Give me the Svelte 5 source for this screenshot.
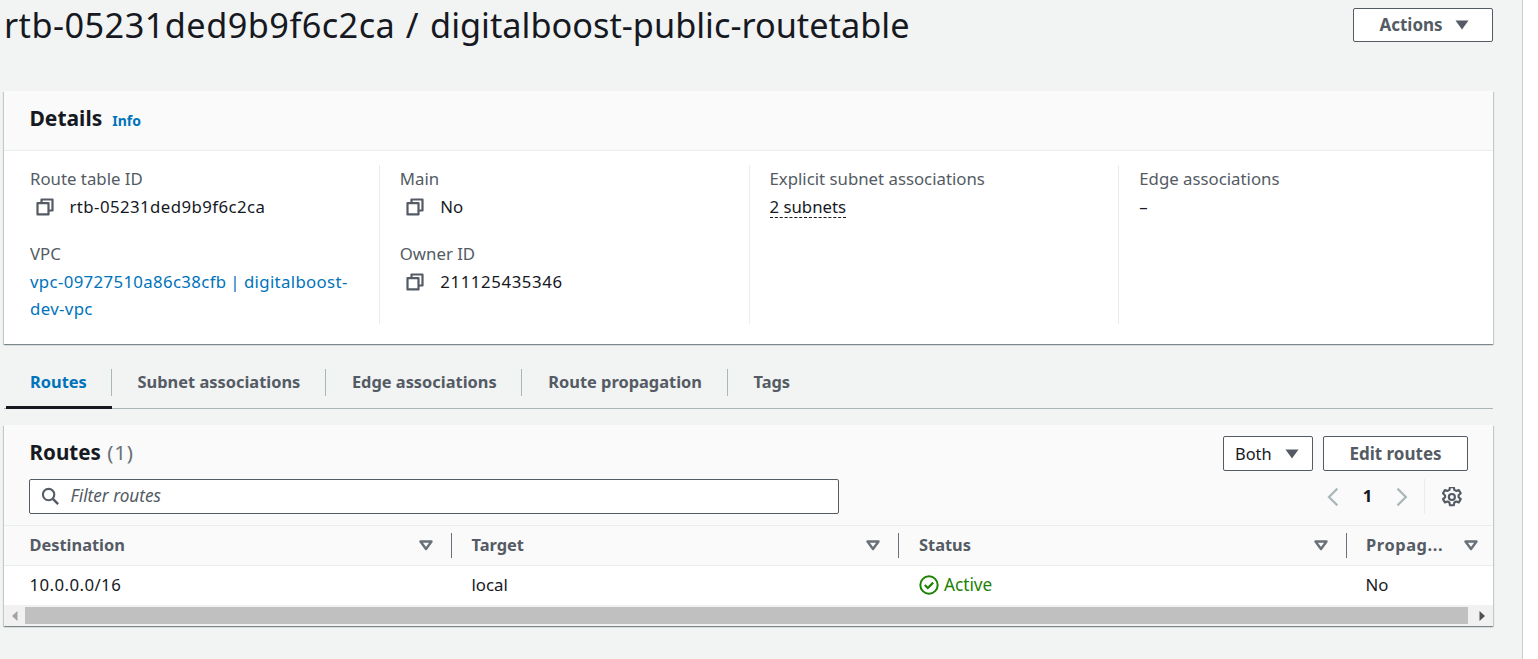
<script>
  const tabs = ['Routes', 'Subnet associations', 'Edge associations', 'Route propagation', 'Tags'];
  const cols = ['Destination', 'Target', 'Status', 'Propag...'];
</script>

{#snippet copy()}
  <svg class="copy" viewBox="0 0 18 18" width="18" height="18" fill="none" stroke="#545b64" stroke-width="2.2" stroke-linejoin="round">
    <rect x="1.5" y="5.2" width="11" height="11.2"/>
    <path d="M5.5 5V1.5h11v11H13"/>
  </svg>
{/snippet}

{#snippet caret()}
  <svg class="caret" viewBox="0 0 14 10" width="14" height="10"><path d="M0.5 0.5h13L7 9.5z" fill="#545b64"/></svg>
{/snippet}

{#snippet sort()}
  <svg class="sort" viewBox="0 0 14 11" width="14" height="11"><path d="M1.5 1.5h11L7 9z" fill="none" stroke="#687078" stroke-width="2.4" stroke-linejoin="round"/></svg>
{/snippet}

<div class="frame">
  <main class="page">
    <header class="top">
      <h1><span class="num">rtb-05231ded9b9f6c2ca</span><span class="slash">/</span>digitalboost-public-routetable</h1>
      <button class="btn actions">Actions {@render caret()}</button>
    </header>

    <section class="card details">
      <div class="card-head">
        <h2>Details</h2><a class="info" href="#i">Info</a>
      </div>
      <div class="grid">
        <div class="col">
          <div class="label">Route table ID</div>
          <div class="val copyval first">{@render copy()}<span class="num">rtb-05231ded9b9f6c2ca</span></div>
          <div class="label second">VPC</div>
          <div class="val link"><a href="#v">vpc-09727510a86c38cfb | digitalboost-dev-vpc</a></div>
        </div>
        <div class="col">
          <div class="label">Main</div>
          <div class="val copyval">{@render copy()}<span>No</span></div>
          <div class="label second">Owner ID</div>
          <div class="val copyval">{@render copy()}<span class="digits">211125435346</span></div>
        </div>
        <div class="col">
          <div class="label">Explicit subnet associations</div>
          <div class="val"><a class="dotted" href="#s">2 subnets</a></div>
        </div>
        <div class="col">
          <div class="label">Edge associations</div>
          <div class="val">–</div>
        </div>
      </div>
    </section>

    <nav class="tabs">
      {#each tabs as t, i}
        <div class="tab" class:active={i === 0}><span>{t}</span></div>
      {/each}
    </nav>

    <section class="card routes">
      <div class="routes-head">
        <div class="row1">
          <h2>Routes <span class="count">(1)</span></h2>
          <div class="btns">
            <button class="btn both"><span>Both</span> {@render caret()}</button>
            <button class="btn edit">Edit routes</button>
          </div>
        </div>
        <div class="row2">
          <div class="filter">
            <svg viewBox="0 0 20 20" width="19" height="19" fill="none" stroke="#545b64" stroke-width="2.2"><circle cx="8" cy="8" r="6"/><path d="M12.5 12.5L18 18" stroke-width="2.6"/></svg>
            <span>Filter routes</span>
          </div>
          <div class="pager">
            <svg viewBox="0 0 12 20" width="12" height="20" fill="none" stroke="#aab7b8" stroke-width="2.2"><path d="M10.5 1.5L2 10l8.5 8.5"/></svg>
            <b>1</b>
            <svg viewBox="0 0 12 20" width="12" height="20" fill="none" stroke="#aab7b8" stroke-width="2.2"><path d="M1.5 1.5L10 10l-8.5 8.5"/></svg>
            <i class="vsep"></i>
            <svg viewBox="1.2 1.2 17.6 17.6" width="20" height="20" fill="none" stroke="#545b64" stroke-width="1.9" stroke-linejoin="round"><circle cx="10" cy="10" r="2.7"/><path d="M8.3 1.2h3.4l.5 2.5 1.6.9 2.4-.8 1.7 2.9-1.9 1.7v1.8l1.9 1.7-1.7 2.9-2.4-.8-1.6.9-.5 2.5H8.3l-.5-2.5-1.6-.9-2.4.8-1.7-2.9 1.9-1.7V8.8L2.1 6.7l1.7-2.9 2.4.8 1.6-.9z"/></svg>
          </div>
        </div>
      </div>
      <div class="thead">
        {#each cols as c, i}
          <div class="th" class:last={i === 3}><span>{c}</span>{@render sort()}</div>
        {/each}
      </div>
      <div class="tbody">
        <div class="td"><span class="num">10.0.0.0/16</span></div>
        <div class="td">local</div>
        <div class="td active-status">
          <svg viewBox="0 0 20 20" width="20" height="20" fill="none" stroke="#1d8102" stroke-width="2"><circle cx="10" cy="10" r="8.7"/><path d="M5.8 10l3 3 5.4-5.4" stroke-width="2.2"/></svg>
          <span>Active</span>
        </div>
        <div class="td no">No</div>
      </div>
      <div class="hscroll">
        <svg viewBox="0 0 6 10" width="6" height="10"><path d="M5.5 0v10L0 5z" fill="#a3a3a3"/></svg>
        <div class="thumb"></div>
        <svg viewBox="0 0 6 10" width="6" height="10"><path d="M0.5 0v10L6 5z" fill="#505050"/></svg>
      </div>
    </section>
  </main>
  <div class="vscroll"></div>
</div>

<style>
  :global(body) { margin: 0; background: #f2f3f3; overflow: hidden; }
  :global(*) { box-sizing: border-box; }
  .frame { display: flex; height: 659px; width: 1538px; font: 16.8px/27px "Noto Sans", sans-serif; color: #16191f; }
  .page { width: 1522px; padding: 8px 29px 0 4px; flex: none; }
  .vscroll { flex: 1; background: #fff; border-left: 1px solid #c4cccc; }
  a { color: #0073bb; text-decoration: none; }
  .num { letter-spacing: .43px; }
  .digits { letter-spacing: .6px; }

  .top { display: flex; justify-content: space-between; align-items: flex-start; height: 83px; }
  h1 { margin: -1px 0 0 0; font-size: 34.3px; font-weight: 400; line-height: 36px; }
  h1 .num { letter-spacing: .45px; }
  .slash { margin: 0 11.5px 0 10.5px; }
  .btn { background: #fff; border: 1px solid #545b64; border-radius: 2px; font: 700 17px/22px "Noto Sans", sans-serif; color: #545b64; display: flex; align-items: center; justify-content: center; padding: 0; }
  .actions { width: 140px; height: 34px; gap: 12px; padding: 0 0 1px 2px; }

  .card { background: #fff; box-shadow: 0 1px 1px 0 rgba(0,28,36,.3), 1px 1px 1px 0 rgba(0,28,36,.15), -1px 1px 1px 0 rgba(0,28,36,.15); }
  .details { height: 253px; }
  .card-head { height: 60px; background: #fafafa; border-bottom: 1px solid #eaeded; padding: 13px 26px 0 25.5px; display: flex; align-items: baseline; gap: 10px; }
  h2 { margin: 0; font-size: 21px; font-weight: 700; line-height: 28px; }
  .info { font-size: 14px; font-weight: 700; line-height: 18px; }

  .grid { display: grid; grid-template-columns: repeat(4, 369.75px); margin-left: 6px; padding-top: 14px; }
  .col { height: 159px; padding: 0 0 0 20px; border-right: 1px solid #eaeded; color: #16191f; }
  .col:last-child { border-right: 0; }
  .label { color: #545b64; }
  .label.second { margin-top: 20px; }
  .val { margin-top: 1px; }
  .link { letter-spacing: .35px; word-spacing: -.8px; padding-right: 20px; }
  .copyval { display: flex; align-items: center; padding-left: 6.5px; gap: 16px; }
  .copyval.first { padding-left: 5.5px; gap: 16px; }
  .copy { flex: none; }
  .dotted { border-bottom: 1px dashed #16191f; display: inline-block; line-height: 21px; color: #16191f; }

  .tabs { display: flex; height: 65px; border-bottom: 1px solid #aab7b8; padding-top: 25px; }
  .tab { height: 39px; font-weight: 700; font-size: 16.4px; color: #545b64; position: relative; }
  .tab span { display: block; padding: 0 24.6px 0 26px; height: 27px; line-height: 25px; border-right: 1px solid #aab7b8; }
  .tab:first-child span { padding-right: 23.8px; }
  .tab:last-child span { border-right: 0; }
  .tab.active { color: #0073bb; }
  .tab.active::after { content: ""; position: absolute; left: 2px; right: 0; bottom: -1px; height: 3px; background: #16191f; }

  .routes { margin-top: 16px; height: 201px; background: #fff; }
  .routes-head { height: 101px; background: #fafafa; padding: 11px 25px 0 25px; border-bottom: 1px solid #eaeded; }
  .row1 { display: flex; justify-content: space-between; align-items: flex-start; height: 43px; }
  .row1 h2 { padding: 2px 0 0 .5px; font-size: 20.6px; }
  .count { color: #687078; font-weight: 400; letter-spacing: .8px; margin-left: 1px; }
  .btns { display: flex; gap: 10px; }
  .both { width: 90px; height: 35px; font-weight: 400; font-size: 16.4px; color: #16191f; gap: 13px; justify-content: flex-start; padding-left: 11px; }
  .edit { width: 145px; height: 35px; }
  .row2 { display: flex; justify-content: space-between; align-items: center; }
  .filter { width: 810px; height: 35px; background: #fff; border: 1px solid #545b64; border-radius: 2px; display: flex; align-items: center; padding-left: 10.5px; gap: 11px; color: #545b64; font-style: italic; font-size: 17.2px; }
  .filter span { padding-bottom: 2px; }
  .pager { display: flex; align-items: center; height: 35px; width: 141px; justify-content: flex-end; padding-right: 6px; }
  .pager b { font-weight: 700; margin: 0 24px; padding-bottom: 2px; }
  .vsep { width: 1px; height: 35px; background: #eaeded; margin: 0 17px 0 16px; }

  .thead { display: grid; grid-template-columns: 447.5px 447.5px 447.5px 1fr; height: 40px; background: #fafafa; border-bottom: 1px solid #eaeded; align-items: center; font-size: 16.4px; }
  .th { display: flex; justify-content: space-between; align-items: center; height: 25px; padding: 0 18px 0 25.5px; border-right: 1px solid #687078; font-weight: 700; color: #545b64; margin-top: -1px; }
  .th span { padding-bottom: 2px; }
  .th:not(:first-child) { padding-left: 20px; }
  .th.last { border-right: 0; padding-right: 15px; letter-spacing: .6px; padding-left: 19.5px; }
  .tbody { display: grid; grid-template-columns: 447.5px 447.5px 447.5px 1fr; height: 39px; background: #fff; align-items: center; }
  .td { padding: 0 0 2px 25.5px; }
  .td:not(:first-child) { padding-left: 20px; }
  .td.no:not(:first-child) { padding-left: 19px; }
  .active-status { display: flex; align-items: center; gap: 5px; color: #1d8102; font-size: 17.2px; }
  .hscroll { height: 21px; background: #f1f1f1; display: flex; align-items: center; padding: 2px 8px 2px 8px; }
  .hscroll svg { flex: none; }
  .thumb { flex: 1; height: 17px; background: #c0c0c0; margin: 0 11px 0 7px; }
</style>
